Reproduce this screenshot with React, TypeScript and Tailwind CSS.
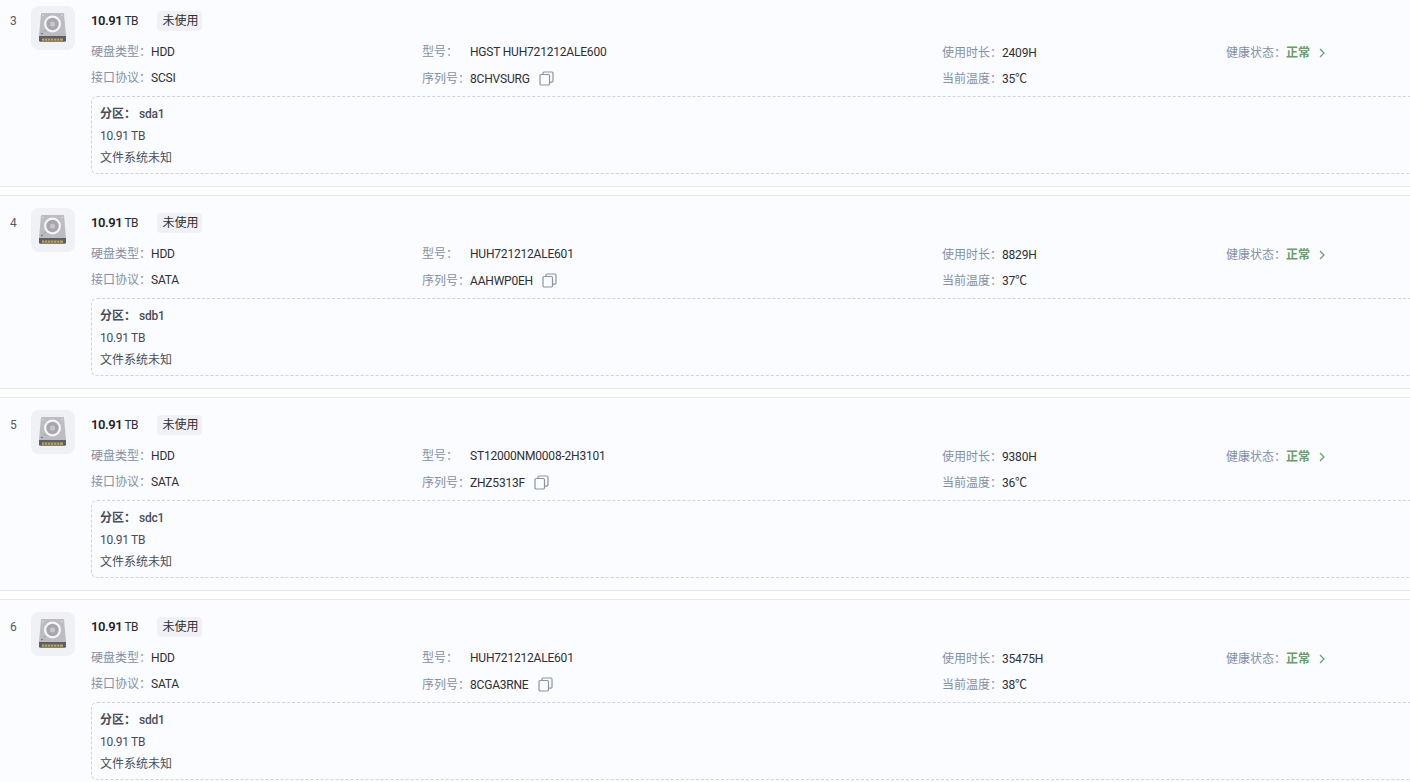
import React from "react"

const disks = [
  { no: 3, proto: "SCSI", model: "HGST HUH721212ALE600", serial: "8CHVSURG", hours: "2409H", temp: "35℃", part: "sda1" },
  { no: 4, proto: "SATA", model: "HUH721212ALE601", serial: "AAHWP0EH", hours: "8829H", temp: "37℃", part: "sdb1" },
  { no: 5, proto: "SATA", model: "ST12000NM0008-2H3101", serial: "ZHZ5313F", hours: "9380H", temp: "36℃", part: "sdc1" },
  { no: 6, proto: "SATA", model: "HUH721212ALE601", serial: "8CGA3RNE", hours: "35475H", temp: "38℃", part: "sdd1" },
]

const DiskIcon = () => (
  <svg width="32" height="32" viewBox="0 0 32 32">
    <path d="M4 1.5A1 1 0 0 1 5 1h21a1 1 0 0 1 1 .5L29 24H2z" fill="#bcbcc2" />
    <path d="M2 24h27v4.5a1.2 1.2 0 0 1-1.2 1.2H3.2A1.2 1.2 0 0 1 2 28.5z" fill="#5c5f68" />
    <path d="M5 26.5h21v2.2H5z" fill="#c7a544" />
    <path d="M7.5 26.5v2.2M10.5 26.5v2.2M13.5 26.5v2.2M16.5 26.5v2.2M19.5 26.5v2.2M22.5 26.5v2.2" stroke="#5c5f68" strokeWidth="0.8" />
    <circle cx="15.5" cy="12" r="8.5" fill="#f5f5f7" />
    <circle cx="15.5" cy="12" r="6.2" fill="#a6a6ac" />
    <circle cx="15.5" cy="12" r="2.6" fill="#c6c6cb" />
    <path d="M9 18l-2.2 1.6" stroke="#a6a6ac" strokeWidth="1.2" />
    <circle cx="6" cy="3.5" r="0.7" fill="#e9e9ec" />
    <circle cx="25" cy="3.5" r="0.7" fill="#e9e9ec" />
    <circle cx="5" cy="21.5" r="0.8" fill="#5c5f68" />
  </svg>
)

const CopyIcon = () => (
  <svg width="15" height="15" viewBox="0 0 15 15" fill="none" stroke="#8a93a6" strokeWidth="1.2" className="mb-[2px] ml-[9px]">
    <rect x="1" y="3.5" width="9.5" height="10.5" rx="1.2" />
    <path d="M4 3.5V2.2A1.2 1.2 0 0 1 5.2 1h7.6A1.2 1.2 0 0 1 14 2.2V10a1.2 1.2 0 0 1-1.2 1.2h-2.3" />
  </svg>
)

const Label = ({ children }: { children: React.ReactNode }) => <span className="text-[#8590a6]">{children}</span>
const Value = ({ children }: { children: React.ReactNode }) => <span className="tracking-[-0.2px]">{children}</span>

const DiskRow = ({ d }: { d: (typeof disks)[number] }) => (
  <div className="flex h-[194px] border-y border-[#e4e6ef] bg-[#fbfcff] text-[12px] text-[#2d2f38]">
    <div className="w-[31px] shrink-0 pt-[18px] pl-[10px] leading-[18px] text-[#55585f]">{d.no}</div>
    <div className="mt-[12px] flex h-[44px] w-[44px] shrink-0 items-center justify-center rounded-[8px] bg-[#f0f1f5]">
      <DiskIcon />
    </div>
    <div className="ml-[16px] min-w-0 flex-1 pt-[16px]">
      <div className="flex h-[22px] items-center">
        <span className="w-[66px]"><b className="text-[13px] font-semibold tracking-[-0.4px] text-[#1f2129]">10.91</b> <span className="-ml-px tracking-[-0.6px]">TB</span></span>
        <span className="rounded-[4px] bg-[#f0f1f5] pl-[5.5px] pr-[3.5px] leading-[20px]">未使用</span>
      </div>
      <div className="mt-[8px] grid h-[52px] grid-cols-[331px_520px_284px_1fr] grid-rows-2 items-center">
        <div className="pb-[2px]"><Label>硬盘类型：</Label><Value>HDD</Value></div>
        <div className="flex pb-[2px]"><span className="w-[48px]"><Label>型号：</Label></span><Value>{d.model}</Value></div>
        <div><Label>使用时长：</Label><Value>{d.hours}</Value></div>
        <div className="flex items-center">
          <Label>健康状态：</Label>
          <span className="font-semibold text-[#669f69]">正常</span>
          <svg width="8" height="10" viewBox="0 0 8 10" fill="none" stroke="#669f69" strokeWidth="1.2" className="ml-[8px]"><path d="M2 1l4 4-4 4" /></svg>
        </div>
        <div className="pb-[2px]"><Label>接口协议：</Label><Value>{d.proto}</Value></div>
        <div className="flex items-center"><Label>序列号：</Label><Value>{d.serial}</Value><CopyIcon /></div>
        <div><Label>当前温度：</Label><Value>{d.temp}</Value></div>
      </div>
      <div className="mt-[4px] -mr-[10px] h-[78px] rounded-[6px] border border-dashed border-[#cfd4dc] px-[8px] pt-[6px] leading-[22px] text-[#4a4d57]">
        <div><b className="font-semibold">分区：</b><span className="ml-[3px] font-medium tracking-[-0.2px]">{d.part}</span></div>
        <div className="tracking-[-0.3px]">10.91 TB</div>
        <div>文件系统未知</div>
      </div>
    </div>
  </div>
)

export default function App() {
  return (
    <div className="h-[782px] overflow-hidden bg-white font-['Roboto','Noto_Sans_CJK_SC',sans-serif]">
      <div className="-mt-[7px] flex flex-col gap-[8px]">
        {disks.map((d) => <DiskRow key={d.no} d={d} />)}
      </div>
    </div>
  )
}
